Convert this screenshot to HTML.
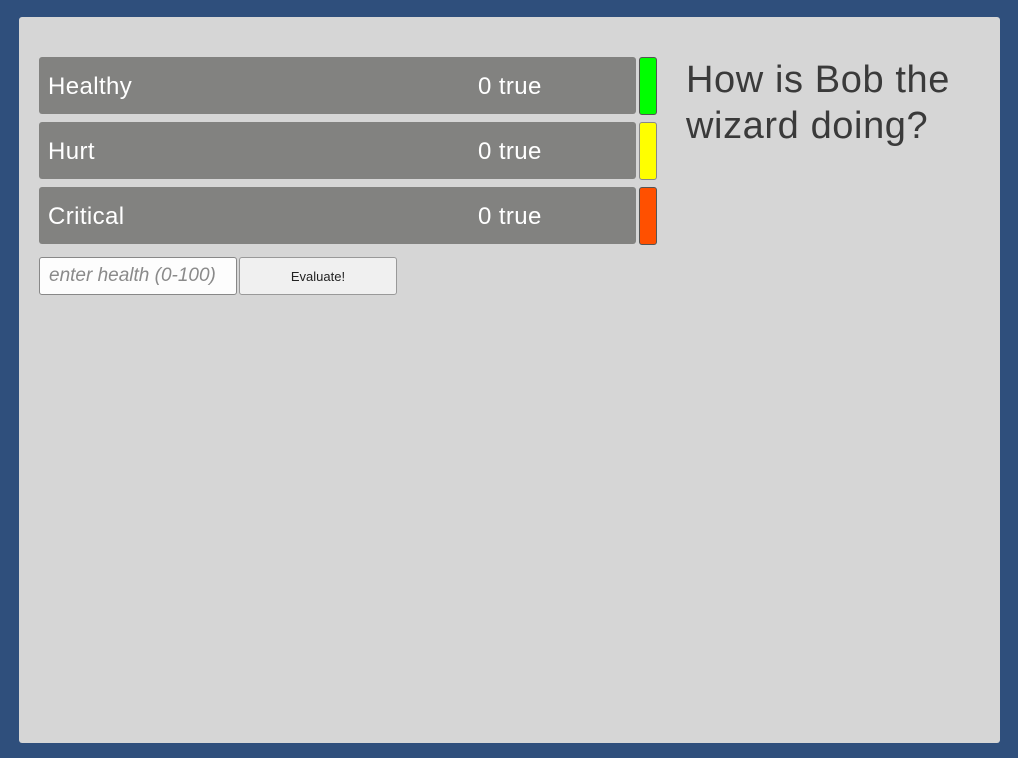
<!DOCTYPE html>
<html><head><meta charset="utf-8"><style>
html,body{margin:0;padding:0;}
body{width:1018px;height:758px;background:#2f4f7c;position:relative;overflow:hidden;font-family:"Liberation Sans",Arial,sans-serif;}
.panel{position:absolute;left:19px;top:17px;width:981px;height:726px;background:#d6d6d6;border-radius:3px;}
.row{position:absolute;left:39px;width:597px;height:57px;background:#828280;border-radius:3px;color:#fff;font-size:24px;letter-spacing:0.4px;}
.row .l{position:absolute;left:9px;top:16px;}
.row .r{position:absolute;left:439px;top:16px;}
.ind{position:absolute;left:639px;width:16px;height:56px;border:1px solid #555;border-radius:3px;}
.h{position:absolute;left:686px;top:57px;font-size:38px;line-height:46px;color:#3a3a3a;letter-spacing:0.6px;}
.inp{position:absolute;left:39px;top:257px;width:198px;height:38px;background:#fdfdfd;border:1px solid #888;border-radius:3px;box-sizing:border-box;font-style:italic;color:#8a8a8a;font-size:19px;padding:7px 0 0 9px;white-space:nowrap;}
.btn{position:absolute;left:239px;top:257px;width:158px;height:38px;background:#f0f0f0;border:1px solid #999;border-radius:3px;box-sizing:border-box;font-size:13px;color:#222;text-align:center;line-height:38px;}
</style></head><body>
<div class="panel"></div>
<div class="row" style="top:57px"><span class="l">Healthy</span><span class="r">0 true</span></div>
<div class="row" style="top:122px"><span class="l">Hurt</span><span class="r">0 true</span></div>
<div class="row" style="top:187px"><span class="l">Critical</span><span class="r">0 true</span></div>
<div class="ind" style="top:57px;background:#00ff00"></div>
<div class="ind" style="top:122px;background:#ffff00;border-color:#888"></div>
<div class="ind" style="top:187px;background:#ff5000"></div>
<div class="h">How is Bob the<br>wizard doing?</div>
<div class="inp">enter health (0-100)</div>
<div class="btn">Evaluate!</div>
</body></html>
